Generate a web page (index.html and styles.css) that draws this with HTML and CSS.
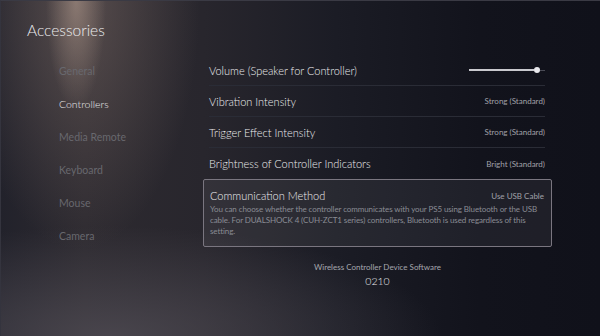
FILE: index.html
```html
<!DOCTYPE html>
<html lang="en">
<head>
  <meta charset="UTF-8">
  <meta name="viewport" content="width=device-width, initial-scale=1.0">
  <title>Accessories</title>
  <link rel="stylesheet" href="styles.css">
</head>
<body>

<div id="screen">
  <h1 id="title">Accessories</h1>

  <div id="layout">
    <ul id="nav">
      <li class="nav-item">General</li>
      <li class="nav-item active">Controllers</li>
      <li class="nav-item">Media Remote</li>
      <li class="nav-item">Keyboard</li>
      <li class="nav-item">Mouse</li>
      <li class="nav-item">Camera</li>
    </ul>

    <div id="settings">
      <div class="row">
        <span class="label">Volume (Speaker for Controller)</span>
        <div class="slider">
          <div class="track"></div>
          <div class="thumb"></div>
          <div class="rest"></div>
        </div>
      </div>
      <div class="row">
        <span class="label">Vibration Intensity</span>
        <span class="value">Strong (Standard)</span>
      </div>
      <div class="row">
        <span class="label">Trigger Effect Intensity</span>
        <span class="value">Strong (Standard)</span>
      </div>
      <div class="row last">
        <span class="label">Brightness of Controller Indicators</span>
        <span class="value">Bright (Standard)</span>
      </div>

      <div class="row focused">
        <div class="focus-head">
          <span class="label">Communication Method</span>
          <span class="value">Use USB Cable</span>
        </div>
        <p class="desc">You can choose whether the controller communicates with your PS5 using Bluetooth or the USB cable. For DUALSHOCK 4 (CUH-ZCT1 series) controllers, Bluetooth is used regardless of this setting.</p>
      </div>

      <div id="software">
        <div class="sw-label">Wireless Controller Device Software</div>
        <div class="sw-version">0210</div>
      </div>
    </div>
  </div>
</div>

</body>
</html>
```

FILE: styles.css
```css
body {
  margin: 0;
  width: 600px;
  height: 336px;
  overflow: hidden;
  font-family: 'Lato', 'Liberation Sans', sans-serif;
  color: #e4e4e6;
  background:
    radial-gradient(ellipse 30px 110px at 76px 0, rgba(190, 165, 150, 0.5), rgba(190, 165, 150, 0) 100%),
    radial-gradient(ellipse 120px 250px at 80px 0, rgba(130, 112, 106, 0.5), rgba(130, 112, 106, 0) 100%),
    radial-gradient(ellipse 330px 110px at 110px 336px, rgba(82, 78, 86, 0.75), rgba(82, 78, 86, 0) 100%),
    linear-gradient(90deg, #22222b 0%, #2d2a30 14%, #28262d 34%, #1b1c25 56%, #12131c 80%, #10111a 100%);
}
#screen {
  height: 336px;
  box-sizing: border-box;
  border-top: 1px solid #3a3a44;
  border-left: 1px solid #34343e;
}
#title {
  margin: 0;
  height: 54px;
  padding: 20px 0 0 26px;
  box-sizing: border-box;
  font-size: 15.5px;
  font-weight: 300;
  color: #ececee;
}
#layout {
  display: flex;
}
#nav {
  list-style: none;
  margin: 0;
  padding: 0 0 0 58px;
  width: 202px;
  box-sizing: border-box;
}
.nav-item {
  height: 33px;
  line-height: 33px;
  font-size: 10.5px;
  color: #68686e;
}
.nav-item.active {
  font-weight: 300;
  color: #ececee;
}
#settings {
  width: 349px;
}
.row {
  display: flex;
  justify-content: space-between;
  align-items: center;
  height: 31px;
  margin: 0 7px 0 6px;
  border-bottom: 1px solid #2a2c36;
  box-sizing: border-box;
}
.row.last {
  border-bottom: none;
}
.label {
  font-size: 11px;
  font-weight: 300;
  color: #ececee;
}
.value {
  font-size: 8px;
  color: #a0a1a8;
}
.slider {
  display: flex;
  align-items: center;
  width: 76px;
}
.track {
  width: 65px;
  height: 2px;
  background: #c9c9ce;
}
.thumb {
  width: 6px;
  height: 6px;
  border-radius: 50%;
  background: #e8e8ec;
}
.rest {
  width: 5px;
  height: 1px;
  background: #4a4b55;
}
.row.focused {
  display: block;
  height: auto;
  margin: 0;
  padding: 8px 7px 9px 6px;
  border: 1px solid #7a7680;
  border-radius: 2px;
  background: rgba(255, 255, 255, 0.06);
}
.focus-head {
  display: flex;
  justify-content: space-between;
  align-items: center;
  height: 15px;
}
.desc {
  margin: 1px 0 0;
  font-size: 8px;
  letter-spacing: -0.1px;
  line-height: 11px;
  color: #8a8c94;
}
#software {
  text-align: center;
  padding-top: 15px;
}
.sw-label {
  font-size: 8px;
  color: #a6a7ae;
}
.sw-version {
  margin-top: 3px;
  font-size: 10.5px;
  font-weight: 300;
  color: #ececf0;
}
```
